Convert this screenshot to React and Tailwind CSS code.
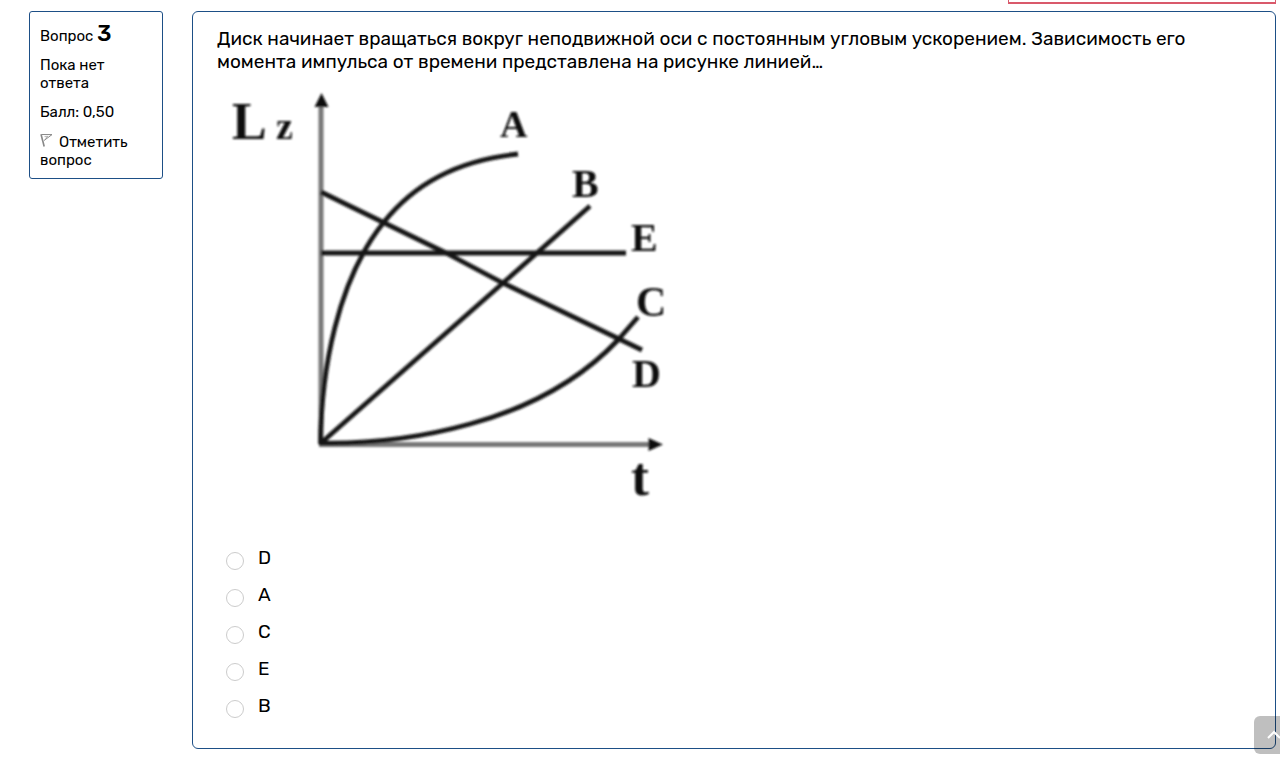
const answers = ["D", "A", "C", "E", "B"];

function Flag() {
  return (
    <svg className="mr-1.5 inline-block h-3.5 w-[13px] align-baseline" viewBox="0 0 13 14" fill="none" aria-hidden="true">
      <path d="M1 1.200 4.200 13.500" stroke="#888" strokeWidth="1.600" />
      <path d="M1.500 1.500 12 1.600 4 7.500" stroke="#888" strokeWidth="1" />
      <path d="M4.500 3.500 8 3.400 5.200 5.500" stroke="#aaa" strokeWidth=".8" />
    </svg>
  );
}

function QuestionInfo() {
  return (
    <aside className="w-[134px] shrink-0 rounded-[3px] border border-[#1d4f86] px-2.5 pt-2 pb-[9px] text-[15px] leading-[18px]">
      <h2 className="leading-[26px]">
        Вопрос <span className="text-[23px] font-medium">3</span>
      </h2>
      <p className="mt-[7px]">Пока нет ответа</p>
      <p className="mt-[11px]">Балл: 0,50</p>
      <button type="button" className="mt-3 block text-left">
        <Flag />
        Отметить вопрос
      </button>
    </aside>
  );
}

function Graph() {
  return (
    <svg className="mt-2 block h-[430px] w-[460px] max-w-full" viewBox="217 81 460 430" role="img" aria-label="Lz(t)">
      <defs>
        <filter id="soft" x="-5%" y="-5%" width="110%" height="110%">
          <feGaussianBlur stdDeviation="0.9" />
        </filter>
      </defs>
      <g filter="url(#soft)">
        <g fill="none" stroke="#777" strokeWidth="5">
          <path d="M321 102V444" />
          <path d="M319 444.500H652" />
        </g>
        <path d="M321.5 93 328.5 107H314.5ZM663 444.500 648.500 438V451Z" fill="#111" />
        <g fill="none" stroke="#181818" strokeWidth="4.800">
          <path d="M320.500 444C321 372 337 280 384 222C414 184 459 160 518 154" />
          <path d="M321 443 503 283 590 206" />
          <path d="M321 253H626" />
          <path d="M321 192 446 253 503 283 642 350" />
          <path d="M319 443C370 444 420 438 470 424C532 407 580 380 618 340L638 317" />
        </g>
        <g fill="#111" fontFamily="Liberation Serif, serif" fontWeight="700">
          <text x="232" y="139" fontSize="52">L</text>
          <text x="276" y="139" fontSize="38">z</text>
          <text x="500" y="137" fontSize="38">A</text>
          <text x="572" y="197" fontSize="40">B</text>
          <text x="631" y="251" fontSize="40">E</text>
          <text x="636" y="316" fontSize="42">C</text>
          <text x="632" y="387" fontSize="40">D</text>
          <text x="631" y="495" fontSize="54">t</text>
        </g>
      </g>
    </svg>
  );
}

export default function App() {
  return (
    <div className="min-h-screen bg-white font-['Rubik','Roboto',sans-serif] text-black">
      <div className="mr-1 ml-auto h-1 w-[268px] border-x border-b-2 border-[#d9596b]" />
      <div className="mt-[7px] mr-1 ml-[29px] flex items-start gap-[29px]">
        <QuestionInfo />
        <main className="min-w-0 flex-1 rounded-md border border-[#1d4f86] px-6 pt-[15px] pb-[23px]">
          <p className="text-[19px] leading-[23px]">
            Диск начинает вращаться вокруг неподвижной оси с постоянным угловым ускорением. Зависимость его
            момента импульса от времени представлена на рисунке линией…
          </p>
          <Graph />
          <fieldset className="mt-[29px] flex flex-col">
            {answers.map((answer) => (
              <label key={answer} className="flex h-[37px] items-center gap-3.5 pl-[9px] text-[19px]">
                <input
                  type="radio"
                  name="answer"
                  value={answer}
                  className="mt-1 size-[18px] appearance-none rounded-full border border-[#ccc] bg-white checked:border-4 checked:border-[#1d4f86]"
                />
                {answer}
              </label>
            ))}
          </fieldset>
        </main>
      </div>
      <button
        type="button"
        aria-label="Наверх"
        className="fixed -right-3.5 bottom-2 flex h-[38px] w-10 items-center justify-center rounded-md bg-black/25 text-white"
      >
        <svg className="h-4 w-4" viewBox="0 0 16 16" fill="none" stroke="currentColor" strokeWidth="2" aria-hidden="true">
          <path d="M2 11 8 5 14 11" />
        </svg>
      </button>
    </div>
  );
}
